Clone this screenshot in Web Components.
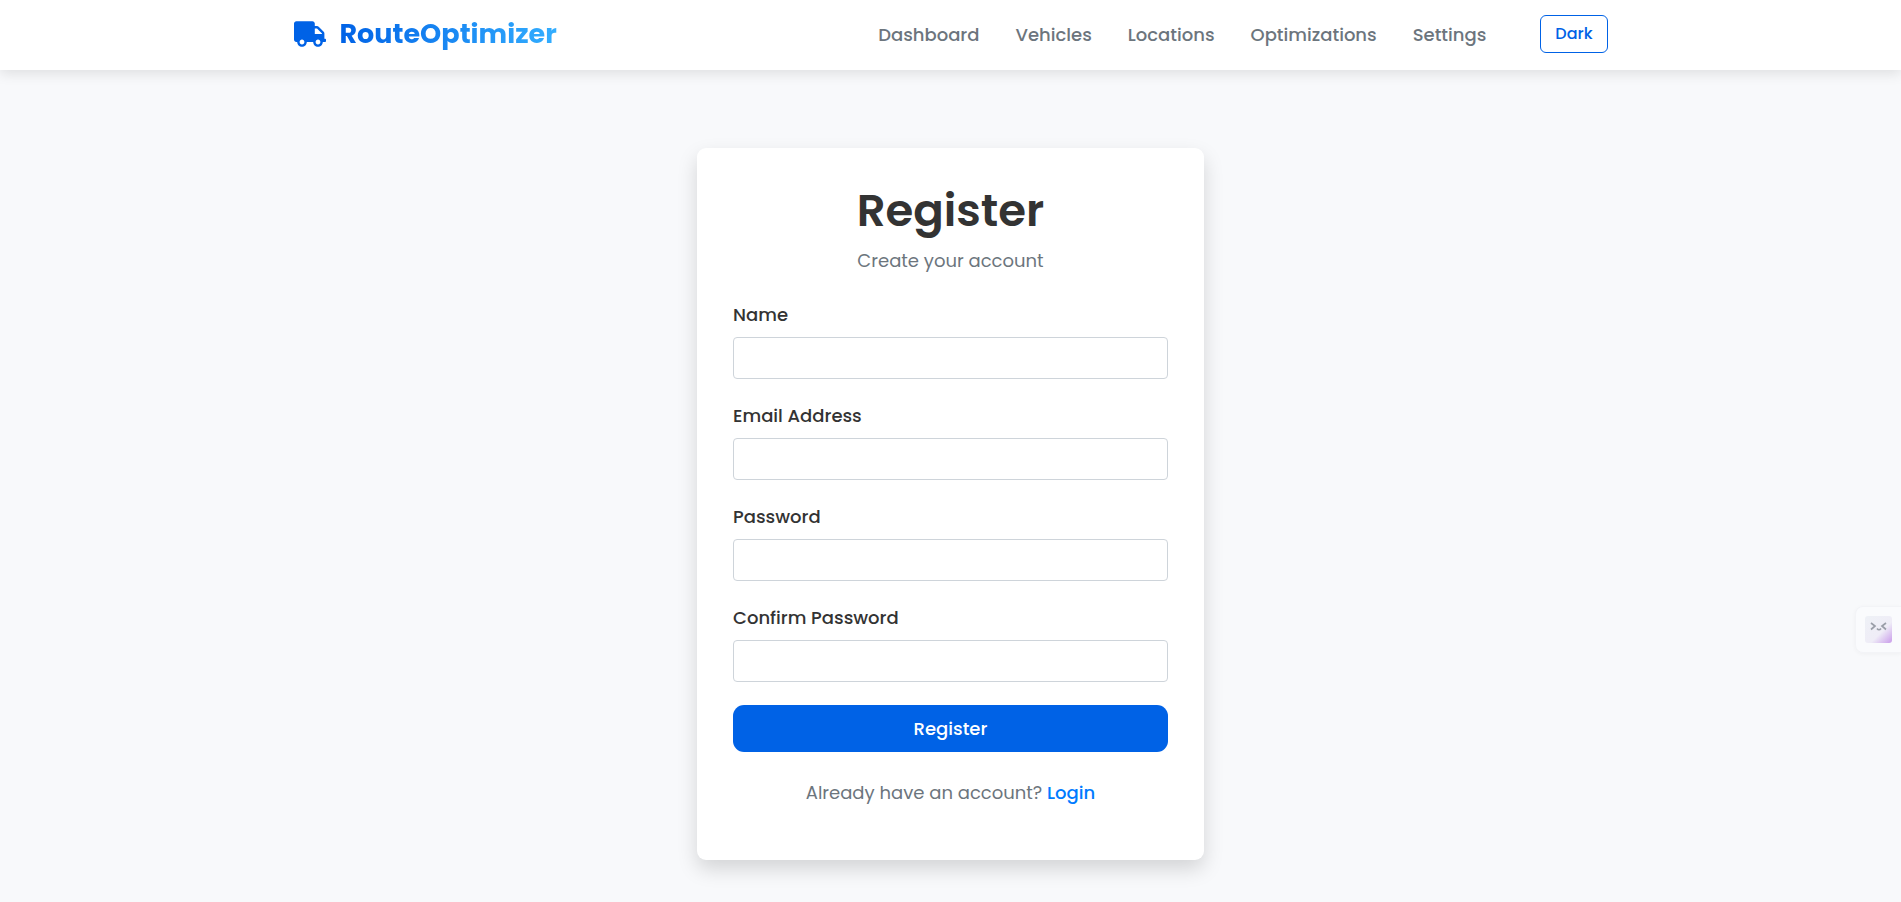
<!DOCTYPE html>
<html lang="en">
<head>
<meta charset="utf-8">
<meta name="viewport" content="width=device-width, initial-scale=1">
<title>Register - RouteOptimizer</title>
<style>
  :root {
    --primary: #0062e6;
    --accent: #33aeff;
    --muted: #6c757d;
    --text: #333;
    --line: #ced4da;
  }
  body {
    margin: 0;
    min-height: 100vh;
    background: #f8f9fb;
    color: var(--text);
    font: 400 18px/28px Poppins, Inter, "Open Sans", sans-serif;
  }
</style>
</head>
<body>
<app-page></app-page>

<script>
const define = (name, html, setup) => {
  const template = document.createElement('template');
  template.innerHTML = html;
  customElements.define(name, class extends HTMLElement {
    constructor() {
      super();
      this.attachShadow({ mode: 'open' }).append(template.content.cloneNode(true));
    }
    connectedCallback() {
      if (setup) setup(this, this.shadowRoot);
    }
  });
};

define('brand-logo', `
  <style>
    :host { display: block; }
    a { display: flex; align-items: center; gap: 14px; text-decoration: none; }
    svg { width: 32px; height: 26px; fill: var(--primary); }
    span {
      font-size: 27px; line-height: 40px; font-weight: 700;
      background: linear-gradient(90deg, var(--primary), var(--accent));
      -webkit-background-clip: text; background-clip: text; color: transparent;
    }
  </style>
  <a href="#">
    <svg viewBox="0 0 640 512" aria-hidden="true"><path d="M624 352h-16V243.900c0-12.700-5.100-24.900-14.100-33.900L494 110.100c-9-9-21.200-14.100-33.900-14.100H416V48c0-26.500-21.500-48-48-48H48C21.500 0 0 21.500 0 48v320c0 26.500 21.500 48 48 48h16c0 53 43 96 96 96s96-43 96-96h128c0 53 43 96 96 96s96-43 96-96h48c8.800 0 16-7.200 16-16v-32c0-8.800-7.200-16-16-16zM160 464c-26.500 0-48-21.500-48-48s21.500-48 48-48 48 21.500 48 48-21.500 48-48 48zm320 0c-26.500 0-48-21.500-48-48s21.500-48 48-48 48 21.500 48 48-21.500 48-48 48zm80-208H416V144h44.100l99.900 99.900V256z"/></svg>
    <span><slot></slot></span>
  </a>`);

define('nav-link', `
  <style>
    :host { display: block; }
    a { color: var(--muted); font-weight: 500; text-decoration: none; }
  </style>
  <a href="#"><slot></slot></a>`);

define('theme-toggle', `
  <style>
    :host { display: block; }
    button {
      display: block; height: 38px; padding: 0 14px; border: 1px solid var(--primary); border-radius: 6px;
      background: none; color: var(--primary); font: inherit; font-size: 16px; font-weight: 500;
    }
  </style>
  <button type="button"><slot></slot></button>`);

define('site-header', `
  <style>
    :host {
      display: block; position: relative; padding-bottom: 2px;
      background: #fff; box-shadow: 0 4px 12px rgba(0, 0, 0, .1);
    }
    header {
      box-sizing: border-box; max-width: 1354px; min-height: 68px; margin: 0 auto; padding: 0 20px;
      display: flex; align-items: center; justify-content: space-between;
    }
    .right { display: flex; align-items: center; gap: 54px; }
    nav { display: flex; gap: 36px; padding-top: 2px; }
  </style>
  <header>
    <brand-logo>RouteOptimizer</brand-logo>
    <div class="right">
      <nav>
        <nav-link>Dashboard</nav-link>
        <nav-link>Vehicles</nav-link>
        <nav-link>Locations</nav-link>
        <nav-link>Optimizations</nav-link>
        <nav-link>Settings</nav-link>
      </nav>
      <theme-toggle>Dark</theme-toggle>
    </div>
  </header>`);

define('form-field', `
  <style>
    :host { display: block; }
    label { display: block; margin-bottom: 8px; font-weight: 500; }
    input {
      display: block; box-sizing: border-box; width: 100%; height: 42px; padding: 0 14px;
      border: 1px solid var(--line); border-radius: 4px; background: #fff; color: inherit; font: inherit;
    }
  </style>
  <label for="control"><slot></slot></label>
  <input id="control">`, (host, root) => {
    root.querySelector('input').type = host.getAttribute('type') || 'text';
  });

define('register-card', `
  <style>
    :host {
      display: block; box-sizing: border-box; width: 100%; max-width: 507px; padding: 36px 36px 53px;
      border-radius: 9px; background: #fff; box-shadow: 0 9px 20px rgba(0, 0, 0, .15);
    }
    h1 { margin: 0; font-size: 45px; line-height: 54px; font-weight: 600; text-align: center; }
    p { margin: 0; color: var(--muted); text-align: center; }
    .lead { margin: 9px 0 26px; }
    form { display: grid; gap: 23px; margin-bottom: 27px; }
    button {
      height: 47px; padding: 0 14px; border: 0; border-radius: 11px;
      background: var(--primary); color: #fff; font: inherit; font-weight: 500;
    }
    a { color: #007bff; font-weight: 500; text-decoration: none; }
  </style>
  <h1>Register</h1>
  <p class="lead">Create your account</p>
  <form>
    <form-field>Name</form-field>
    <form-field type="email">Email Address</form-field>
    <form-field type="password">Password</form-field>
    <form-field type="password">Confirm Password</form-field>
    <button type="button">Register</button>
  </form>
  <p>Already have an account? <a href="#">Login</a></p>`);

define('side-assistant', `
  <style>
    :host { position: fixed; right: 0; bottom: 249px; display: block; }
    button {
      display: block; padding: 9px; border: 1px solid #f3f4f7; border-right: 0; border-radius: 8px 0 0 8px;
      background: #fafbfd; box-shadow: 0 1px 4px rgba(0, 0, 0, .04);
    }
    svg { display: block; width: 27px; height: 27px; }
  </style>
  <button type="button" aria-label="Assistant">
    <svg viewBox="0 0 27 27" fill="none">
      <defs><linearGradient id="g" x1="0" y1="0" x2="1" y2="1">
        <stop offset="0" stop-color="#eef1f6"/><stop offset=".6" stop-color="#efedf7"/><stop offset="1" stop-color="#c99bea"/>
      </linearGradient></defs>
      <rect width="27" height="27" rx="3" fill="url(#g)"/>
      <path d="M6 7l4 3-4 3.500M21 7l-4 3 4 3.500M12 12.500q2 2.500 4 0" stroke="#9a9ea8" stroke-width="1.700"/>
    </svg>
  </button>`);

define('app-page', `
  <style>
    :host { display: block; }
    main { display: flex; justify-content: center; padding: 78px 20px 42px; }
  </style>
  <site-header></site-header>
  <main><register-card></register-card></main>
  <side-assistant></side-assistant>`);
</script>
</body>
</html>
